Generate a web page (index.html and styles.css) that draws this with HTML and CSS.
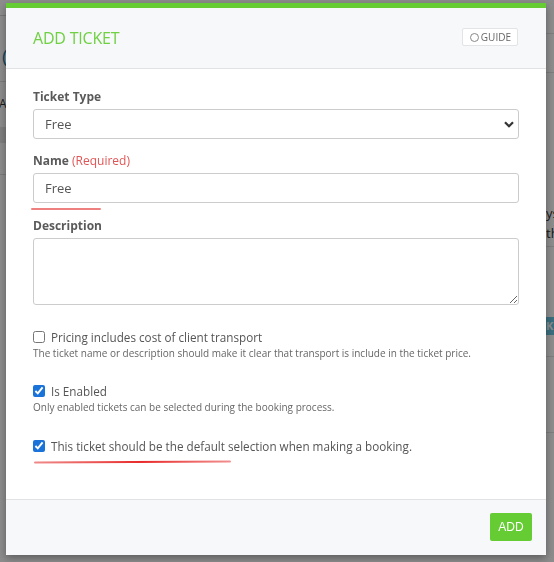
FILE: index.html
```html
<!DOCTYPE html>
<html>
<head>
<meta charset="utf-8">
<link rel="stylesheet" href="styles.css">
</head>
<body>
<div class="page">
  <div class="page-left">
    <div class="topbar"></div>
    <div class="page-title">(0)</div>
    <div class="page-row">Ar</div>
    <div class="page-band"></div>
    <div class="page-row2"></div>
  </div>
  <div class="page-right">
    <div class="r-line1"></div>
    <div class="r-line2"></div>
    <div class="r-text">ys<br>th</div>
    <div class="r-line3"></div>
    <div class="r-badge-row"><span class="r-badge">KE</span></div>
    <div class="r-line4"></div>
  </div>
</div>
<div class="backdrop"></div>
<div class="modal">
  <div class="modal-header">
    <h1 class="modal-title">ADD TICKET</h1>
    <button class="guide-btn"><span class="guide-icon"></span>GUIDE</button>
  </div>
  <div class="modal-body">
    <label class="field-label">Ticket Type</label>
    <div class="select-wrap">
      <select class="control"><option>Free</option></select>
      <svg class="chevron" width="10" height="7" viewBox="0 0 10 7"><path d="M1 1.2 L5 5.2 L9 1.2" fill="none" stroke="#333" stroke-width="2.2"/></svg>
    </div>
    <label class="field-label gap">Name <span class="req">(Required)</span></label>
    <div class="name-wrap">
      <input class="control" type="text" value="Free">
      <span class="mark mark-name"></span>
    </div>
    <label class="field-label gap2">Description</label>
    <textarea class="control area"></textarea>

    <div class="check-row first"><input type="checkbox"><span>Pricing includes cost of client transport</span></div>
    <div class="help">The ticket name or description should make it clear that transport is include in the ticket price.</div>

    <div class="check-row"><input type="checkbox" checked><span>Is Enabled</span></div>
    <div class="help">Only enabled tickets can be selected during the booking process.</div>

    <div class="check-row last"><input type="checkbox" checked><span>This ticket should be the default selection when making a booking.</span>
      <span class="mark mark-default"></span>
    </div>
  </div>
  <div class="modal-footer">
    <button class="add-btn">ADD</button>
  </div>
</div>
</body>
</html>
```
FILE: styles.css
```css
* { box-sizing: border-box; }
html, body { margin: 0; padding: 0; }
body {
  width: 554px;
  height: 562px;
  overflow: hidden;
  background: #fff;
  font-family: "Open Sans", "Noto Sans", sans-serif;
  color: #555;
}

/* underlying page */
.page {
  display: grid;
  grid-template-columns: 300px 254px;
  height: 562px;
}
.page-left, .page-right { overflow: hidden; }
.topbar { height: 16px; border-bottom: 1px solid #d8d8d8; }
.page-title {
  margin-top: 30px;
  padding-left: 2px;
  font-size: 19px;
  line-height: 20px;
  color: #1f7fa8;
  height: 36px;
  border-bottom: 1px solid #e0e0e0;
}
.page-row {
  font-size: 12px;
  line-height: 44px;
  height: 45px;
  color: #333;
  margin-left: -1px;
}
.page-band { height: 16px; background: #e6e6e6; }
.page-row2 { height: 32px; border-bottom: 1px solid #e0e0e0; }
.r-line1 { height: 34px; border-bottom: 1px solid #e3e3e3; }
.r-line2 { height: 39px; border-bottom: 1px solid #e3e3e3; }
.r-text {
  margin-top: 130px;
  padding-left: 246px;
  font-size: 13px;
  line-height: 20px;
  color: #333;
  white-space: nowrap;
}
.r-line3 { height: 4px; border-bottom: 1px solid #e3e3e3; }
.r-badge-row { padding-top: 66px; padding-left: 246px; height: 110px; border-bottom: 1px solid #e3e3e3; }
.r-badge {
  display: inline-block;
  background: #6cc7e3;
  color: #fff;
  font-size: 11px;
  font-weight: 700;
  line-height: 18px;
  padding: 0 4px 0 0;
}
.r-line4 { height: 76px; border-bottom: 1px solid #e3e3e3; }

.backdrop {
  position: fixed;
  inset: 0;
  background: rgba(0, 0, 0, 0.45);
}

/* modal */
.modal {
  position: fixed;
  left: 6px;
  top: 3px;
  width: 540px;
  height: 552px;
  background: #fff;
  border-top: 5px solid #66cc33;
  box-shadow: 0 3px 8px rgba(0, 0, 0, 0.35);
  display: flex;
  flex-direction: column;
}
.modal-header {
  height: 61px;
  flex: none;
  background: #f7f8fa;
  border-bottom: 1px solid #e1e2e4;
  display: flex;
  align-items: center;
  justify-content: space-between;
  padding: 0 28px 0 27px;
}
.modal-title {
  margin: 0;
  font-size: 16px;
  font-weight: 400;
  color: #6fd042;
  letter-spacing: -0.2px;
}
.guide-btn {
  height: 18px;
  padding: 0 6px 0 7px;
  border: 1px solid #e3e4e6;
  border-radius: 2px;
  background: #fff;
  font-family: inherit;
  font-size: 10px;
  color: #666;
  display: flex;
  align-items: center;
  gap: 2px;
  margin-top: -2px;
}
.guide-icon {
  width: 9px;
  height: 9px;
  border: 1.5px solid #888;
  border-radius: 50%;
}

.modal-body {
  flex: 1;
  padding: 19px 27px 0 27px;
  display: flex;
  flex-direction: column;
}
.field-label {
  font-size: 12px;
  font-weight: 700;
  color: #5a5a5a;
  line-height: 18px;
  margin-bottom: 3px;
}
.field-label.gap { margin-top: 13px; }
.field-label.gap2 { margin-top: 14px; }
.req { color: #e05555; font-weight: 400; }

.control {
  display: block;
  width: 486px;
  height: 30px;
  border: 1px solid #ccc;
  border-radius: 3px;
  background: #fff;
  font-family: inherit;
  font-size: 13px;
  color: #555;
  padding: 0 11px;
  margin: 0;
  outline: none;
}
.select-wrap { position: relative; }
select.control { appearance: none; -webkit-appearance: none; }
.chevron { position: absolute; right: 5px; top: 12px; }
.name-wrap { position: relative; }
.area { height: 67px; resize: vertical; padding: 6px 11px; }

.mark {
  position: absolute;
  height: 2px;
  border-radius: 1px;
}
.mark-name {
  left: -2px;
  top: 35px;
  width: 70px;
  background: #ef8080;
}
.mark-default {
  left: 1px;
  top: 24px;
  width: 197px;
  background: linear-gradient(90deg, #f08a8a, #e82a2a 55%, #f29090);
  transform: rotate(-0.3deg);
}

.check-row {
  position: relative;
  display: flex;
  align-items: center;
  gap: 6px;
  font-size: 11.7px;
  line-height: 18px;
  color: #555;
  margin-top: 22px;
}
.check-row.first { margin-top: 23px; }
.check-row.last { margin-top: 23px; }
.check-row input {
  margin: 0;
  width: 12px;
  height: 12px;
  accent-color: #1a73d9;
}
.help {
  font-size: 10px;
  line-height: 14px;
  color: #666;
}

.modal-footer {
  height: 56px;
  flex: none;
  background: #f7f8fa;
  border-top: 1px solid #e1e2e4;
  display: flex;
  justify-content: flex-end;
  align-items: flex-start;
  padding: 13px 14px 0 0;
}
.add-btn {
  width: 42px;
  height: 28px;
  border: none;
  border-radius: 2px;
  background: #66cc33;
  color: #fff;
  font-family: "Liberation Sans", Arial, sans-serif;
  font-size: 12px;
  padding: 0;
}
```
